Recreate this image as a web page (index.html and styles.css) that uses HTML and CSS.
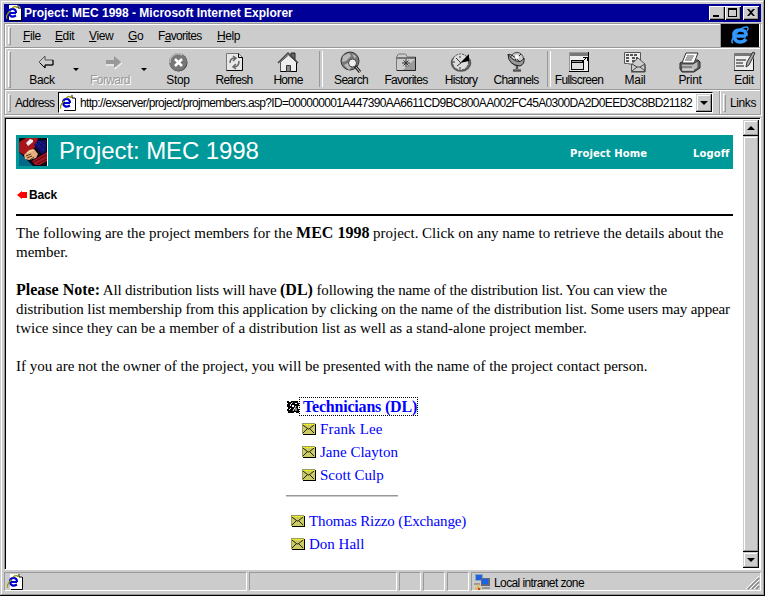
FILE: index.html
```html
<!DOCTYPE html>
<html lang="en">
<head>
<meta charset="utf-8">
<title>Project: MEC 1998</title>
<link rel="stylesheet" href="styles.css">
</head>
<body>
<svg class="defs" width="0" height="0">
  <symbol id="iepage" viewBox="0 0 16 16">
    <path d="M3 0h9l3 3v12H3z" fill="#fff"/>
    <path d="M12 0v3h3M15.500 3v12.500H4" fill="none" stroke="#000"/>
    <path d="M10 8H3q0-4 3.500-4T10 8M3 8q1 5.500 7 2.500" fill="none" stroke="#0000cc" stroke-width="2.200"/>
    <path d="M1 13.500q-2-2 3-7.500M6 3q4-3 5 0" fill="none" stroke="#999900" stroke-width="1.300"/>
  </symbol>
  <symbol id="mail" viewBox="0 0 14 12">
    <path d="M1 1h13v11H1z" fill="#000"/><path d="M0 0h13v11H0z" fill="#999966"/>
    <path d="M1 1h12v10H1z" fill="#cccc66"/><path d="M1 1.500h11" stroke="#ffff00" stroke-dasharray="2 1"/>
    <path d="M1 2l5 4h1l5-4M1 10l4-4M12 10L8 6" fill="none" stroke="#222200"/>
  </symbol>
</svg>
<div class="window">
  <header class="titlebar">
    <svg class="i16" viewBox="0 0 16 16"><use href="#iepage"/></svg>
    <span class="caption">Project: MEC 1998 - Microsoft Internet Explorer</span>
    <div class="winbtns">
      <i class="wb"><svg viewBox="0 0 12 10"><path d="M2 7h6v2H2z"/></svg></i>
      <i class="wb"><svg viewBox="0 0 12 10"><path d="M1 0h9v9H1zM2 2v6h7V2z" fill-rule="evenodd"/></svg></i>
      <i class="wb close"><svg viewBox="0 0 12 10"><path d="M2 1h2l2 2 2-2h2L7 4.500l3 3.500H8L6 6 4 8H2l3-3.500z"/></svg></i>
    </div>
  </header>

  <section class="bars">
    <nav class="menubar">
      <i class="grip"></i>
      <span class="m-file"><u>F</u>ile</span><span class="m-edit"><u>E</u>dit</span><span class="m-view"><u>V</u>iew</span><span class="m-go"><u>G</u>o</span><span class="m-fav">F<u>a</u>vorites</span><span class="m-help"><u>H</u>elp</span>
      <div class="brand"><svg viewBox="0 0 38 22"><g fill="none" stroke="#3399ff"><path d="M25 12H14M25 12q1-6-6-6t-6 6 6 6q4 0 6-3" stroke-width="3.500"/><path d="M12 19q-3-1 2-8 7-9 12-8 2 1 0 4" stroke-width="1.500"/></g></svg></div>
    </nav>
    <div class="toolbar">
      <i class="grip"></i>
      <div class="tool short w54"><svg viewBox="0 0 24 22"><path d="M9 11l6-6v4h8v5h-8v3z" fill="#ccc" stroke="#555"/><path d="M10 12l5 5v-3h8V9" fill="none" stroke="#000"/></svg><span>Back</span></div>
      <i class="drop"></i>
      <div class="tool w56 off"><svg viewBox="0 0 24 22"><path d="M24 12l-7 6v-4H8" fill="none" stroke="#fff"/><path d="M23 11l-7-6v4H8v4h8v4z" fill="#999"/></svg><span>Forward</span></div>
      <i class="drop d2"></i>
      <div class="tool short w56"><svg viewBox="0 0 24 22"><circle cx="12.500" cy="11.500" r="9" fill="#333"/><circle cx="12" cy="11" r="9" fill="#777"/><path d="M4 12a8 8 0 0 1 12-8" fill="none" stroke="#bbb" stroke-width="1.500"/><path d="M9 8l7 7M16 8l-7 7" stroke="#fff" stroke-width="2.500"/></svg><span>Stop</span></div>
      <div class="tool w56"><svg viewBox="0 0 24 22"><path d="M4.500 2.500h12l4 4v13h-16z" fill="#e8e8e8" stroke="#777"/><path d="M16.500 2.500v4h4v13h-16" fill="none" stroke="#000"/><path d="M8 12q0-5 5-5M11 5l3 2-3 3M17 10q0 6-5 6M14 13l-3 3 3 2" fill="none" stroke="#666" stroke-width="1.500"/></svg><span>Refresh</span></div>
      <div class="tool w52"><svg viewBox="0 0 24 22"><path d="M15 2h4v7h-4z" fill="#666" stroke="#222"/><path d="M4.500 11v9.500h16V11L12.500 4z" fill="#eee" stroke="#555"/><path d="M20.500 12v8.500h-16" fill="none" stroke="#000"/><path d="M2 12L12 2l10 10" fill="none" stroke="#444" stroke-width="1.500"/><path d="M10.500 14.500h4v6h-4z" fill="#888" stroke="#333"/></svg><span>Home</span></div>
      <i class="sep"></i>
      <div class="tool w50"><svg viewBox="0 0 24 22"><circle cx="11" cy="10" r="9" fill="#777" stroke="#333"/><path d="M4 5l6-3 2 3-5 5-4 1zM13 3l4 2-1 3zM5 14l4-2 3 5-2 2z" fill="#bbb"/><path d="M16 15l5 6" stroke="#222" stroke-width="3"/><path d="M17 16l4 5" stroke="#ccc"/><circle cx="13.500" cy="12" r="4" fill="#eee" stroke="#444"/></svg><span>Search</span></div>
      <div class="tool w60"><svg viewBox="0 0 24 22"><path d="M2.500 19.500V6l2-3h7l2 3h8v13.500z" fill="#ccc" stroke="#777"/><path d="M3 19.500h18.500V6M3 7h18" fill="none" stroke="#222"/><path d="M9 19L21 8v11z" fill="#999"/><path d="M12 8v8M8 12h8M9.500 9.500l5 5M14.500 9.500l-5 5" stroke="#333"/></svg><span>Favorites</span></div>
      <div class="tool w50"><svg viewBox="0 0 24 22"><ellipse cx="12" cy="12" rx="9.500" ry="8" fill="#777" stroke="#555" stroke-width="1.500"/><circle cx="11.500" cy="11" r="8" fill="#ddd" stroke="#555" stroke-dasharray="2 1"/><path d="M11 12L20 3v7z" fill="#000"/><path d="M7 7l5 5-4 3M11 5v2M11 16v2M4 11h2" stroke="#333" fill="none"/></svg><span>History</span></div>
      <div class="tool w60"><svg viewBox="0 0 24 22"><circle cx="13" cy="8" r="6.500" fill="#ccc" stroke="#444"/><path d="M4 3q0 11 12 12 5-2 4-8-3 5-8 3-5-2-8-7" fill="#999" stroke="#222"/><path d="M4 4q2-3 12 7M11 9l6-6" stroke="#222" fill="none"/><circle cx="13" cy="6" r="2" fill="#fff"/><path d="M13 15v3M9 19.500h8" stroke="#555" stroke-width="2.500"/></svg><span>Channels</span></div>
      <i class="sep narrow"></i>
      <div class="tool w56"><svg viewBox="0 0 24 22" class="crisp"><path d="M2 1h20v20H2z" fill="#000"/><path d="M2 1h19v19H2z" fill="#999"/><path d="M3 4h18v16H3z" fill="#eee"/><path d="M3 2h18v3H3z" fill="#777"/><path d="M4 9h13v10H4z" fill="#000"/><path d="M5 12h11v6H5z" fill="#ddd"/><path d="M5 10h11v1H5z" fill="#999"/><path d="M14 12l5-5M16 6h4v4" stroke="#000" fill="none"/></svg><span>Fullscreen</span></div>
      <div class="tool short w56"><svg viewBox="0 0 24 22"><path d="M1.500 1.500h16v13h-3l-10-2h-3z" fill="#eee" stroke="#555"/><path d="M3 4h12M3 7h4M9 7h6M3 10h4M9 10h4" stroke="#222" stroke-width="1.500" stroke-dasharray="3 1"/><path d="M8.500 13l6.500-6 7 6v7.500H8.500z" fill="#ccc" stroke="#555"/><path d="M9 13l5 3h3l5-3M9 20l5-4M22 20l-5-4M8 21h14v-7" stroke="#444" fill="none"/></svg><span>Mail</span></div>
      <div class="tool short w54"><svg viewBox="0 0 24 22"><path d="M2 12l6-3h12l2 2v6l-6 4H4l-2-3z" fill="#777" stroke="#222"/><path d="M3 13h12l5-3v7l-5 3H4z" fill="#bbb" stroke="#444"/><path d="M4 12l4-10h12l-4 10z" fill="#fff" stroke="#333"/><path d="M9 5h7M8 7h7M7 9h7M4 16h10" stroke="#555"/><path d="M4 19h12" stroke="#eee"/></svg><span>Print</span></div>
      <div class="tool short edit"><svg viewBox="0 0 24 22"><path d="M2.500 2.500h19v17h-19z" fill="#eee" stroke="#777"/><path d="M3 4h18" stroke="#777" stroke-width="2"/><path d="M2 19.500h19.500V8M4 9h10M4 12h7M4 15h8" stroke="#111" fill="none"/><path d="M14 16l1-5 6-10 2 1-6 12z" fill="#aaa" stroke="#333"/></svg><span>Edit</span></div>
    </div>
    <div class="addrrow">
      <div class="address">
        <i class="grip"></i><span class="alabel">Address</span>
        <div class="field"><svg class="i16" viewBox="0 0 16 16"><use href="#iepage"/></svg><span class="url">http://exserver/project/projmembers.asp?ID=000000001A447390AA6611CD9BC800AA002FC45A0300DA2D0EED3C8BD21182</span><i class="btn combo"><b class="down"></b></i></div>
      </div>
      <div class="links"><i class="grip"></i><span>Links</span></div>
    </div>
  </section>

  <main class="view">
    <article class="page">
      <div class="banner">
        <svg class="logo" viewBox="0 0 29 28"><path d="M0 0h29v28H0z" fill="#fff"/><path d="M0 0h28v28H0z" fill="#080816"/><path d="M0 14l14 14H0z" fill="#006a88"/><path d="M0 4l7-4h12l-3 9-9 9-7-4z" fill="#a9141b"/><path d="M7 5l4-4 3 1v2L9 8z" fill="#eee"/><path d="M18 3l9-1v11l-4 3-8-9z" fill="#10106c"/><path d="M17 5l9 8M21 4l6 5" stroke="#3333aa" stroke-dasharray="1 1"/><path d="M13 23l15-9v9l-7 4h-5z" fill="#a41621"/><path d="M15 24l13-7M18 26l10-5" stroke="#500810"/><path d="M5 17l5-5 5-1 4 5-2 4-7 2-4-1z" fill="#e6ad7d"/><path d="M7 18l5-2M8 20l5-2M11 22l4-3" stroke="#593018"/><path d="M8 15l6-3" stroke="#ffe0b0"/></svg>
        <h1>Project: MEC 1998</h1><a class="phome">Project Home</a><a class="logoff">Logoff</a>
      </div>
      <div class="backlink"><svg viewBox="0 0 12 8"><path d="M0 4l5-4v1h5v6H5v1z" fill="#f00"/></svg><b>Back</b></div>
      <div class="rule"></div>
      <p><span class="t1">The following are the project members for the <b>MEC 1998</b> project. Click on any name to retrieve the details about the</span><br><span>member.</span></p>
      <p><span class="t3"><b>Please Note:</b> All distribution lists will have <b>(DL)</b> following the name of the distribution list. You can view the</span><br><span class="t4">distribution list membership from this application by clicking on the name of the distribution list. Some users may appear</span><br><span>twice since they can be a member of a distribution list as well as a stand-alone project member.</span></p>
      <p><span>If you are not the owner of the project, you will be presented with the name of the project contact person.</span></p>
      <div class="members">
        <div class="group"><svg class="people" viewBox="0 0 12 12"><path d="M0 0h2v1h2V0h7v2h1v3h-1v3h1v4H9v-1H7v1H1v-2H0V8h1V6H0V3h1V2H0z"/><path d="M3.500 5V3.500l2-2M8 2.500h2M2 9l2-2M6 10l3-5M9 10V7" fill="none" stroke="#fff"/><path d="M5 4h2v2H5z" fill="#fff"/></svg><a class="focus"><b>Technicians (DL)</b></a></div>
        <div class="row sub"><svg viewBox="0 0 14 12"><use href="#mail"/></svg><a class="n1">Frank Lee</a></div>
        <div class="row sub"><svg viewBox="0 0 14 12"><use href="#mail"/></svg><a>Jane Clayton</a></div>
        <div class="row sub"><svg viewBox="0 0 14 12"><use href="#mail"/></svg><a>Scott Culp</a></div>
        <div class="divider"></div>
        <div class="row"><svg viewBox="0 0 14 12"><use href="#mail"/></svg><a class="n4">Thomas Rizzo (Exchange)</a></div>
        <div class="row"><svg viewBox="0 0 14 12"><use href="#mail"/></svg><a>Don Hall</a></div>
      </div>
    </article>
    <div class="scroll"><i class="btn"><b class="up"></b></i><i class="btn thumb"></i><i class="btn"><b class="down"></b></i></div>
  </main>

  <footer class="status">
    <div class="pane p1"><svg class="i16" viewBox="0 0 16 16"><use href="#iepage"/></svg></div>
    <div class="pane p2"></div><div class="pane p3"></div><div class="pane p3"></div><div class="pane p3"></div>
    <div class="pane zone"><svg class="net" viewBox="0 0 16 16"><path d="M1 0h8v7H1z" fill="#8ab"/><path d="M2 1h6v5H2z" fill="#2060e0"/><path d="M7 4h9v8H7z" fill="#667"/><path d="M8 5h6v5H8z" fill="#1764e8"/><path d="M0 9h6v2H0zM8 13h8v2H8z" fill="#999"/><path d="M4 10v4M1 14.500h6" stroke="#dfba22" stroke-width="1.500"/><path d="M4 14h2v2H4z" fill="#d33"/></svg><span>Local intranet zone</span><svg class="size" viewBox="0 0 14 14"><path d="M0 13L13 0M4 13l9-9M8 13l5-5" stroke="#fff"/><path d="M2 13L13 2M6 13l7-7M10 13l3-3" stroke="#888" stroke-width="1.500"/></svg></div>
  </footer>
</div>
</body>
</html>
```
FILE: styles.css
```css
* { box-sizing: border-box; }
body { margin: 0; overflow: hidden; }
i { font-style: normal; }
svg { display: block; flex: none; }
.defs { position: absolute; }
.crisp { shape-rendering: crispEdges; }
.window {
  width: 765px; height: 596px; background: #ccc; padding: 4px 3px 3px 4px;
  box-shadow: inset -1px -1px #000, inset 1px 1px #ccc, inset -2px -2px #999, inset 2px 2px #fff;
  font: 12px/14px "Liberation Sans", Arial, sans-serif; color: #000;
  display: flex; flex-direction: column;
}
.i16 { width: 16px; height: 16px; }

.titlebar { height: 18px; width: 757px; background: #009; color: #fff; display: flex; align-items: center; padding: 0 2px; flex: none; }
.caption { font-weight: bold; margin-left: 2px; white-space: nowrap; flex: 1; }
.winbtns { display: flex; }
.wb { width: 16px; height: 14px; background: #ccc; padding: 1px 2px; box-shadow: inset 1px 1px #fff, inset -1px -1px #000, inset -2px -2px #999; }
.wb svg { width: 12px; height: 10px; margin-top: 1px; }
.close { margin-left: 2px; }

.bars { margin-top: 1px; height: 92px; flex: none; width: 757px; border: 1px solid #999; box-shadow: inset 1px 1px #fff, 1px 1px #fff; }
.bars span { white-space: nowrap; }
.grip { width: 3px; background: #ccc; border: 1px solid; border-color: #fff #999 #999 #fff; flex: none; }
.menubar { height: 24px; display: flex; align-items: center; border-bottom: 1px solid #999; padding-left: 3px; }
.menubar .grip { height: 18px; margin-right: 12px; }
.menubar span { flex: none; letter-spacing: -.4px; }
.menubar .m-file { width: 32px; }
.menubar .m-edit { width: 34px; }
.menubar .m-view { width: 39px; }
.menubar .m-go { width: 30px; }
.menubar .m-fav { width: 59px; letter-spacing: -.65px; }
.menubar .m-help { width: 40px; }
.brand { margin-left: auto; width: 40px; height: 23px; background: #000; border-left: 1px solid #999; border-right: 1px solid #fff; }
.brand svg { width: 38px; height: 22px; }
.toolbar { height: 42px; display: flex; border-top: 1px solid #fff; border-bottom: 1px solid #999; padding-left: 3px; }
.toolbar .grip { height: 37px; margin: 2px 4px 0 0; }
.tool { display: flex; flex-direction: column; align-items: center; padding-top: 2px; flex: none; letter-spacing: -.7px; }
.short { letter-spacing: -.3px; }
.tool svg { width: 24px; height: 22px; }
.tool span { margin-top: -1px; line-height: 16px; }
.off span { color: #999; text-shadow: 1px 1px #fff; letter-spacing: -.6px; }
.w50 { width: 50px; }
.w52 { width: 52px; }
.w54 { width: 54px; }
.w56 { width: 56px; }
.w60 { width: 60px; }
.edit { width: 34px; margin-left: 10px; }
.drop { width: 13px; flex: none; padding: 19px 0 0 4px; }
.drop::before { content: ""; display: block; border: solid transparent; border-width: 3px 3px 0; border-top-color: #000; width: 0; }
.d2 { width: 12px; padding-left: 3px; }
.sep { width: 12px; flex: none; padding: 2px 0 0 5px; }
.sep::before { content: ""; display: block; width: 2px; height: 36px; border-left: 1px solid #999; border-right: 1px solid #fff; }
.narrow { width: 5px; padding-left: 1px; }
.addrrow { height: 24px; display: flex; border-top: 1px solid #fff; }
.address { width: 715px; display: flex; align-items: center; padding-left: 3px; border-right: 1px solid #999; }
.address .grip, .links .grip { height: 18px; }
.alabel { width: 43px; margin-left: 4px; letter-spacing: -.65px; }
.field { width: 655px; height: 21px; background: #fff; display: flex; align-items: center; padding-left: 1px; border: 1px solid; border-color: #000 #fff #fff #000; }
.url { margin-left: 4px; width: 615px; letter-spacing: -.67px; }
.btn { display: flex; align-items: center; justify-content: center; background: #ccc; width: 16px; height: 16px; flex: none; box-shadow: inset -1px -1px #000, inset 1px 1px #ccc, inset -2px -2px #999, inset 2px 2px #fff; }
.combo { height: 18px; margin-left: auto; }
.down, .up { border: 4px solid transparent; border-bottom: 0; border-top-color: #000; }
.up { border: 4px solid transparent; border-top: 0; border-bottom-color: #000; }
.links { flex: 1; display: flex; align-items: center; border-left: 1px solid #fff; padding-left: 2px; }
.links span { margin-left: 4px; letter-spacing: -.4px; }

.view { margin-top: 2px; height: 453px; width: 757px; flex: none; display: flex; border: 1px solid; border-color: #999 #fff #fff #999; box-shadow: inset 1px 1px #000; background: #fff; padding: 2px 1px 1px 1px; }
.page { width: 737px; padding: 15px 0 0 10px; font: 15px/19px "Liberation Serif", "Times New Roman", serif; overflow: hidden; }
.page b { font-size: 16px; line-height: 1; letter-spacing: 0; }
.banner { width: 717px; height: 34px; background: #099; color: #fff; display: flex; align-items: center; padding-left: 3px; }
.logo { width: 29px; height: 28px; }
h1 { margin: 0 0 2px 11px; width: 511px; font: 24px/30px "Liberation Sans", Arial, sans-serif; letter-spacing: -.1px; white-space: nowrap; }
.banner a { font: bold 10px/14px "DejaVu Sans", Verdana, sans-serif; letter-spacing: .1px; white-space: nowrap; margin-top: 3px; }
.phome { width: 123px; }
.backlink { height: 45px; display: flex; align-items: center; padding: 6px 0 0 1px; }
.backlink svg { width: 12px; height: 8px; }
.page .backlink b { font: bold 12px/14px "Liberation Sans", Arial, sans-serif; letter-spacing: -.2px; }
.rule { width: 717px; height: 2px; background: #000; margin-bottom: 8px; }
p { margin: 0 0 19px; white-space: nowrap; }
.t1 { letter-spacing: -.015px; }
.t3 { letter-spacing: -.17px; }
.t4 { letter-spacing: -.12px; }
.members { margin: 21px 0 0 270px; color: #00f; }
.group { display: flex; height: 20px; align-items: flex-start; }
.people { width: 12px; height: 12px; margin: 4px 0 0 1px; }
.focus { height: 19px; width: 119px; border: 1px dotted #000; padding-left: 3px; white-space: nowrap; display: flex; align-items: center; }
.page .focus b { letter-spacing: -.2px; }
.row { height: 23px; display: flex; align-items: center; padding-left: 5px; white-space: nowrap; }
.row svg { width: 14px; height: 12px; margin-right: 4px; }
.row a { padding-top: 2px; }
.n1 { letter-spacing: .15px; }
.n4 { letter-spacing: -.12px; }
.sub { padding-left: 16px; }
.divider { width: 112px; height: 2px; background: #999; border-bottom: 1px solid #ccc; margin: 9px 0 12px; }
.scroll { width: 16px; background: #ccc; display: flex; flex-direction: column; }
.thumb { flex: 1; }

.status { margin-top: 2px; height: 19px; width: 757px; display: flex; gap: 2px; }
.pane { border: 1px solid; border-color: #999 #fff #fff #999; flex: none; display: flex; align-items: center; }
.p1 { width: 243px; padding-left: 2px; }
.p2 { width: 148px; }
.p3 { width: 22px; }
.zone { flex: 1; padding-left: 2px; }
.zone span { margin: 2px 0 0 4px; letter-spacing: -.6px; white-space: nowrap; }
.net { width: 16px; height: 16px; }
.size { width: 14px; height: 14px; margin: 3px 0 0 auto; }
```
